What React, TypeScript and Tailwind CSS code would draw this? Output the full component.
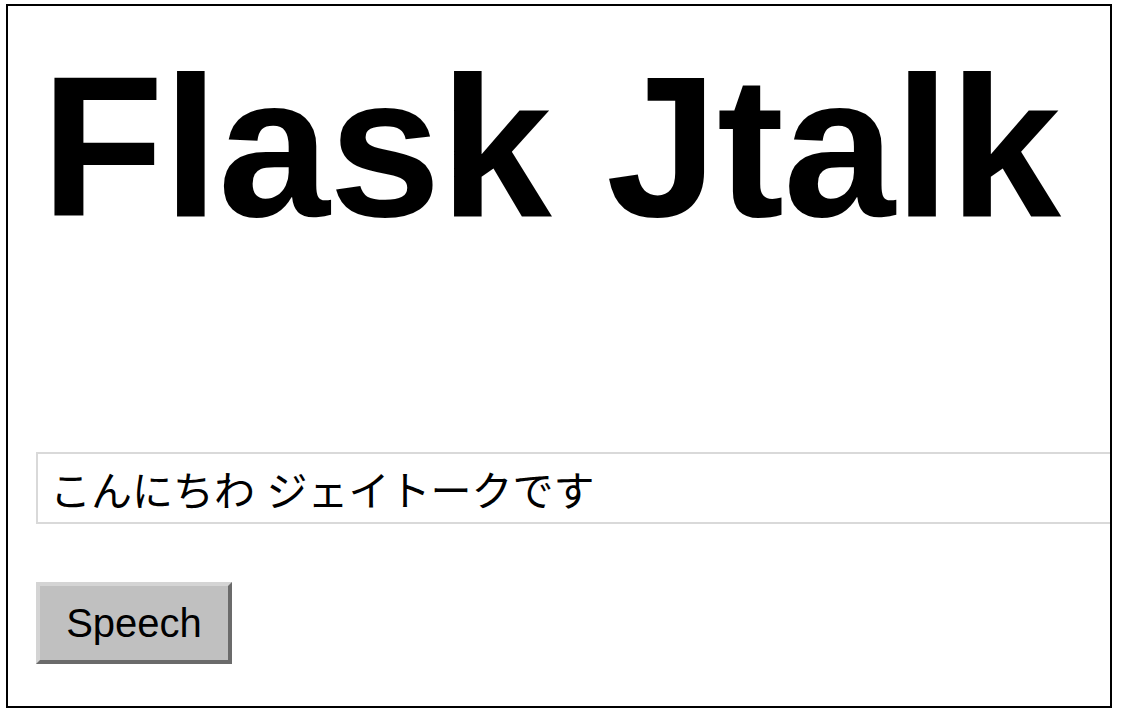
export default function App() {
  return (
    <div className="min-h-screen bg-white pt-[4px] pl-[6px]">
      <div className="flex flex-col items-start w-[1106px] h-[704px] border-2 border-black overflow-hidden bg-white pl-[28px]">
        <h1 className="mt-[40px] ml-[5px] text-[201px] leading-none font-bold tracking-[-0.8px] text-black whitespace-nowrap font-['Liberation_Sans',Arial,sans-serif]">
          Flask Jtalk
        </h1>

        <input
          type="text"
          defaultValue="こんにちわ ジェイトークです"
          className="mt-[205px] w-[1100px] h-[72px] shrink-0 border-2 border-[#d9d9d9] bg-white pl-[12px] text-[41px] text-black outline-none font-['Liberation_Sans','Noto_Sans_CJK_JP',sans-serif]"
        />

        <button
          type="button"
          className="mt-[58px] w-[196px] h-[82px] border-4 border-t-[#d4d4d4] border-l-[#d4d4d4] border-r-[#6b6b6b] border-b-[#6b6b6b] bg-[#c0c0c0] text-[40px] text-black font-['Liberation_Sans',Arial,sans-serif]"
        >
          Speech
        </button>
      </div>
    </div>
  );
}
